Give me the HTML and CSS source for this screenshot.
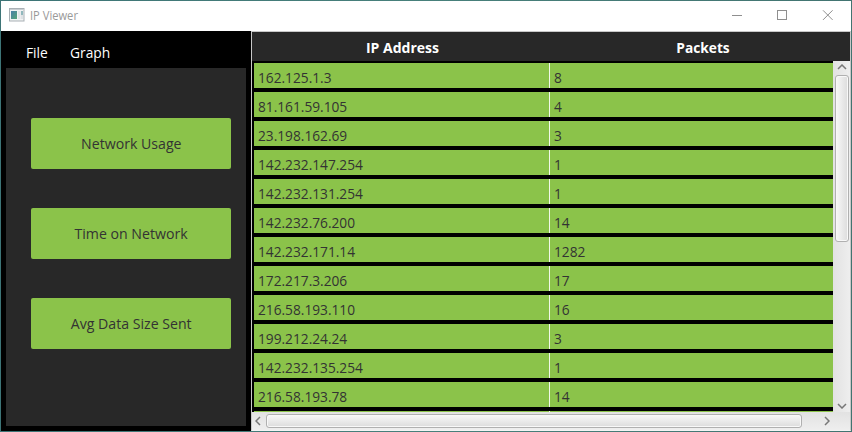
FILE: index.html
```html
<!DOCTYPE html>
<html lang="en">
<head>
<meta charset="utf-8">
<title>IP Viewer</title>
<link rel="stylesheet" href="styles.css">
</head>
<body>
<div class="window">
  <header class="titlebar">
    <svg class="app-icon" width="16" height="14" viewBox="0 0 16 14">
      <defs><linearGradient id="pane" x1="0" y1="0" x2="1" y2="1"><stop offset="0" stop-color="#4a7fa8"/><stop offset="1" stop-color="#57a578"/></linearGradient></defs>
      <rect x=".5" y=".5" width="14.5" height="12.5" fill="#f2f3f4" stroke="#a9b0b5"/>
      <path d="M1 1.5h14" stroke="#c9ced2"/>
      <rect x="2" y="3" width="6" height="8" fill="url(#pane)"/>
      <rect x="9" y="3" width="2.5" height="8" fill="#e3e5e7"/>
      <rect x="12" y="3" width="2" height="4" fill="#91b8bd"/>
      <rect x="12" y="7" width="2" height="4" fill="#dfe2e5"/>
    </svg>
    <span class="title">IP Viewer</span>
    <svg class="controls" width="102" height="12" viewBox="0 0 102 12" fill="none" stroke="#8f8f8f">
      <path d="M0 5.5h10"/>
      <rect x="45.5" y=".5" width="9" height="9"/>
      <path d="M91 .3l9.6 9.6M100.6.3L91 9.9"/>
    </svg>
  </header>
  <main class="content">
    <aside class="side">
      <nav class="menu"><span class="file">File</span><span class="graph">Graph</span></nav>
      <section class="panel">
        <button><span>Network Usage</span></button>
        <button><span>Time on Network</span></button>
        <button><span>Avg Data Size Sent</span></button>
      </section>
    </aside>
    <section class="table">
      <div class="head"><span class="address">IP Address</span><span class="packets">Packets</span></div>
      <div class="view">
        <div class="rows">
          <div class="row"><div><span>162.125.1.3</span></div><div><span>8</span></div></div>
          <div class="row"><div><span>81.161.59.105</span></div><div><span>4</span></div></div>
          <div class="row"><div><span>23.198.162.69</span></div><div><span>3</span></div></div>
          <div class="row"><div><span>142.232.147.254</span></div><div><span>1</span></div></div>
          <div class="row"><div><span>142.232.131.254</span></div><div><span>1</span></div></div>
          <div class="row"><div><span>142.232.76.200</span></div><div><span>14</span></div></div>
          <div class="row"><div><span>142.232.171.14</span></div><div><span>1282</span></div></div>
          <div class="row"><div><span>172.217.3.206</span></div><div><span>17</span></div></div>
          <div class="row"><div><span>216.58.193.110</span></div><div><span>16</span></div></div>
          <div class="row"><div><span>199.212.24.24</span></div><div><span>3</span></div></div>
          <div class="row"><div><span>142.232.135.254</span></div><div><span>1</span></div></div>
          <div class="row"><div><span>216.58.193.78</span></div><div><span>14</span></div></div>
          <div class="row"><div></div><div></div></div>
        </div>
        <div class="vbar">
          <svg width="10" height="6" viewBox="0 0 10 6"><path d="M1 5l4-4 4 4"/></svg>
          <div class="thumb"></div>
          <svg class="down" width="10" height="6" viewBox="0 0 10 6"><path d="M1 1l4 4 4-4"/></svg>
        </div>
      </div>
      <div class="hbar">
        <svg width="6" height="10" viewBox="0 0 6 10"><path d="M5 1L1 5l4 4"/></svg>
        <div class="thumb"></div>
        <svg class="right" width="6" height="10" viewBox="0 0 6 10"><path d="M1 1l4 4-4 4"/></svg>
      </div>
    </section>
  </main>
</div>
</body>
</html>
```
FILE: styles.css
```css
* { box-sizing: border-box; }
body {
  margin: 0;
  width: 852px;
  height: 432px;
  overflow: hidden;
  padding: 1px;
  background: linear-gradient(90deg, #3d7476, #47807b 50%, #427471);
  font-family: "Open Sans", "Noto Sans", sans-serif;
  font-size: 15px;
}
.window { width: 850px; height: 430px; background: #000; }
.titlebar {
  height: 30px;
  display: flex;
  align-items: center;
  background: #fff;
  padding: 0 17px 0 8px;
}
.app-icon { margin-top: -2px; }
.title { margin: -1px 0 0 5px; font-size: 12px; color: #999; transform: scaleX(.93); transform-origin: left; }
.controls { margin-left: auto; }
.content { display: flex; height: 400px; }
.side { width: 250px; padding: 0 5px 5px; }
.menu {
  height: 37px;
  padding: 11px 0 0 20px;
  display: flex;
  gap: 22px;
  line-height: 20px;
  color: #fff;
}
.menu span { transform: scaleX(.92); transform-origin: left; }
.file { width: 22px; }
.panel {
  height: 358px;
  padding: 50px 15px 0 25px;
  display: flex;
  flex-direction: column;
  gap: 39px;
  background: #282828;
}
.panel button {
  height: 51px;
  border: 0;
  border-radius: 2px;
  padding: 0 0 2px;
  background: #8bc34a;
  color: #333;
  font: inherit;
}
.panel button span { display: inline-block; transform: scaleX(.942); }
.table {
  width: 600px;
  border: 1px solid #c8c8c8;
  border-bottom-color: #f4f4f4;
  display: flex;
  flex-direction: column;
}
.head {
  height: 29px;
  flex: none;
  display: flex;
  line-height: 31px;
  text-align: center;
  color: #fff;
  font-weight: 700;
  background: #282828;
}
.address { width: 301px; transform: scaleX(.935); }
.packets { width: 300px; transform: scaleX(.915); }
.address, .packets { flex: none; }
.head { width: 598px; overflow: hidden; }
.view { height: 351px; flex: none; display: flex; overflow: hidden; }
.rows { width: 581px; padding: 2px 0 0 2px; }
.row { height: 25px; margin-bottom: 4px; display: flex; background: #8bc34a; color: #333; line-height: 29px; }
.row div { padding-left: 4px; }
.row div:first-child { width: 296px; border-right: 1px solid #f1f8e8; }
.row span { display: inline-block; transform: scaleX(.914); transform-origin: left; }
.vbar { width: 17px; padding: 3px 1px 3px 1px; display: flex; flex-direction: column; align-items: center; background: linear-gradient(90deg, #e2e2e2, #eee); }
.vbar .thumb { width: 14px; height: 167px; margin-top: 5px; background: linear-gradient(90deg, #f8f8f8, #dcdcdc); }
.thumb { border: 1px solid #b0b0b0; border-radius: 3px; box-shadow: inset 0 0 0 1px #f8f8f8; }
.down { margin-top: auto; }
.hbar { height: 18px; flex: none; padding: 0 3px; display: flex; align-items: center; background: linear-gradient(#e2e2e2, #eee); }
.hbar .thumb { width: 536px; height: 14px; margin-left: 5px; background: linear-gradient(#f8f8f8, #dcdcdc); }
.right { margin-left: auto; margin-right: 17px; }
.vbar svg path, .hbar svg path { fill: none; stroke: #777; stroke-width: 1.5; }
```
